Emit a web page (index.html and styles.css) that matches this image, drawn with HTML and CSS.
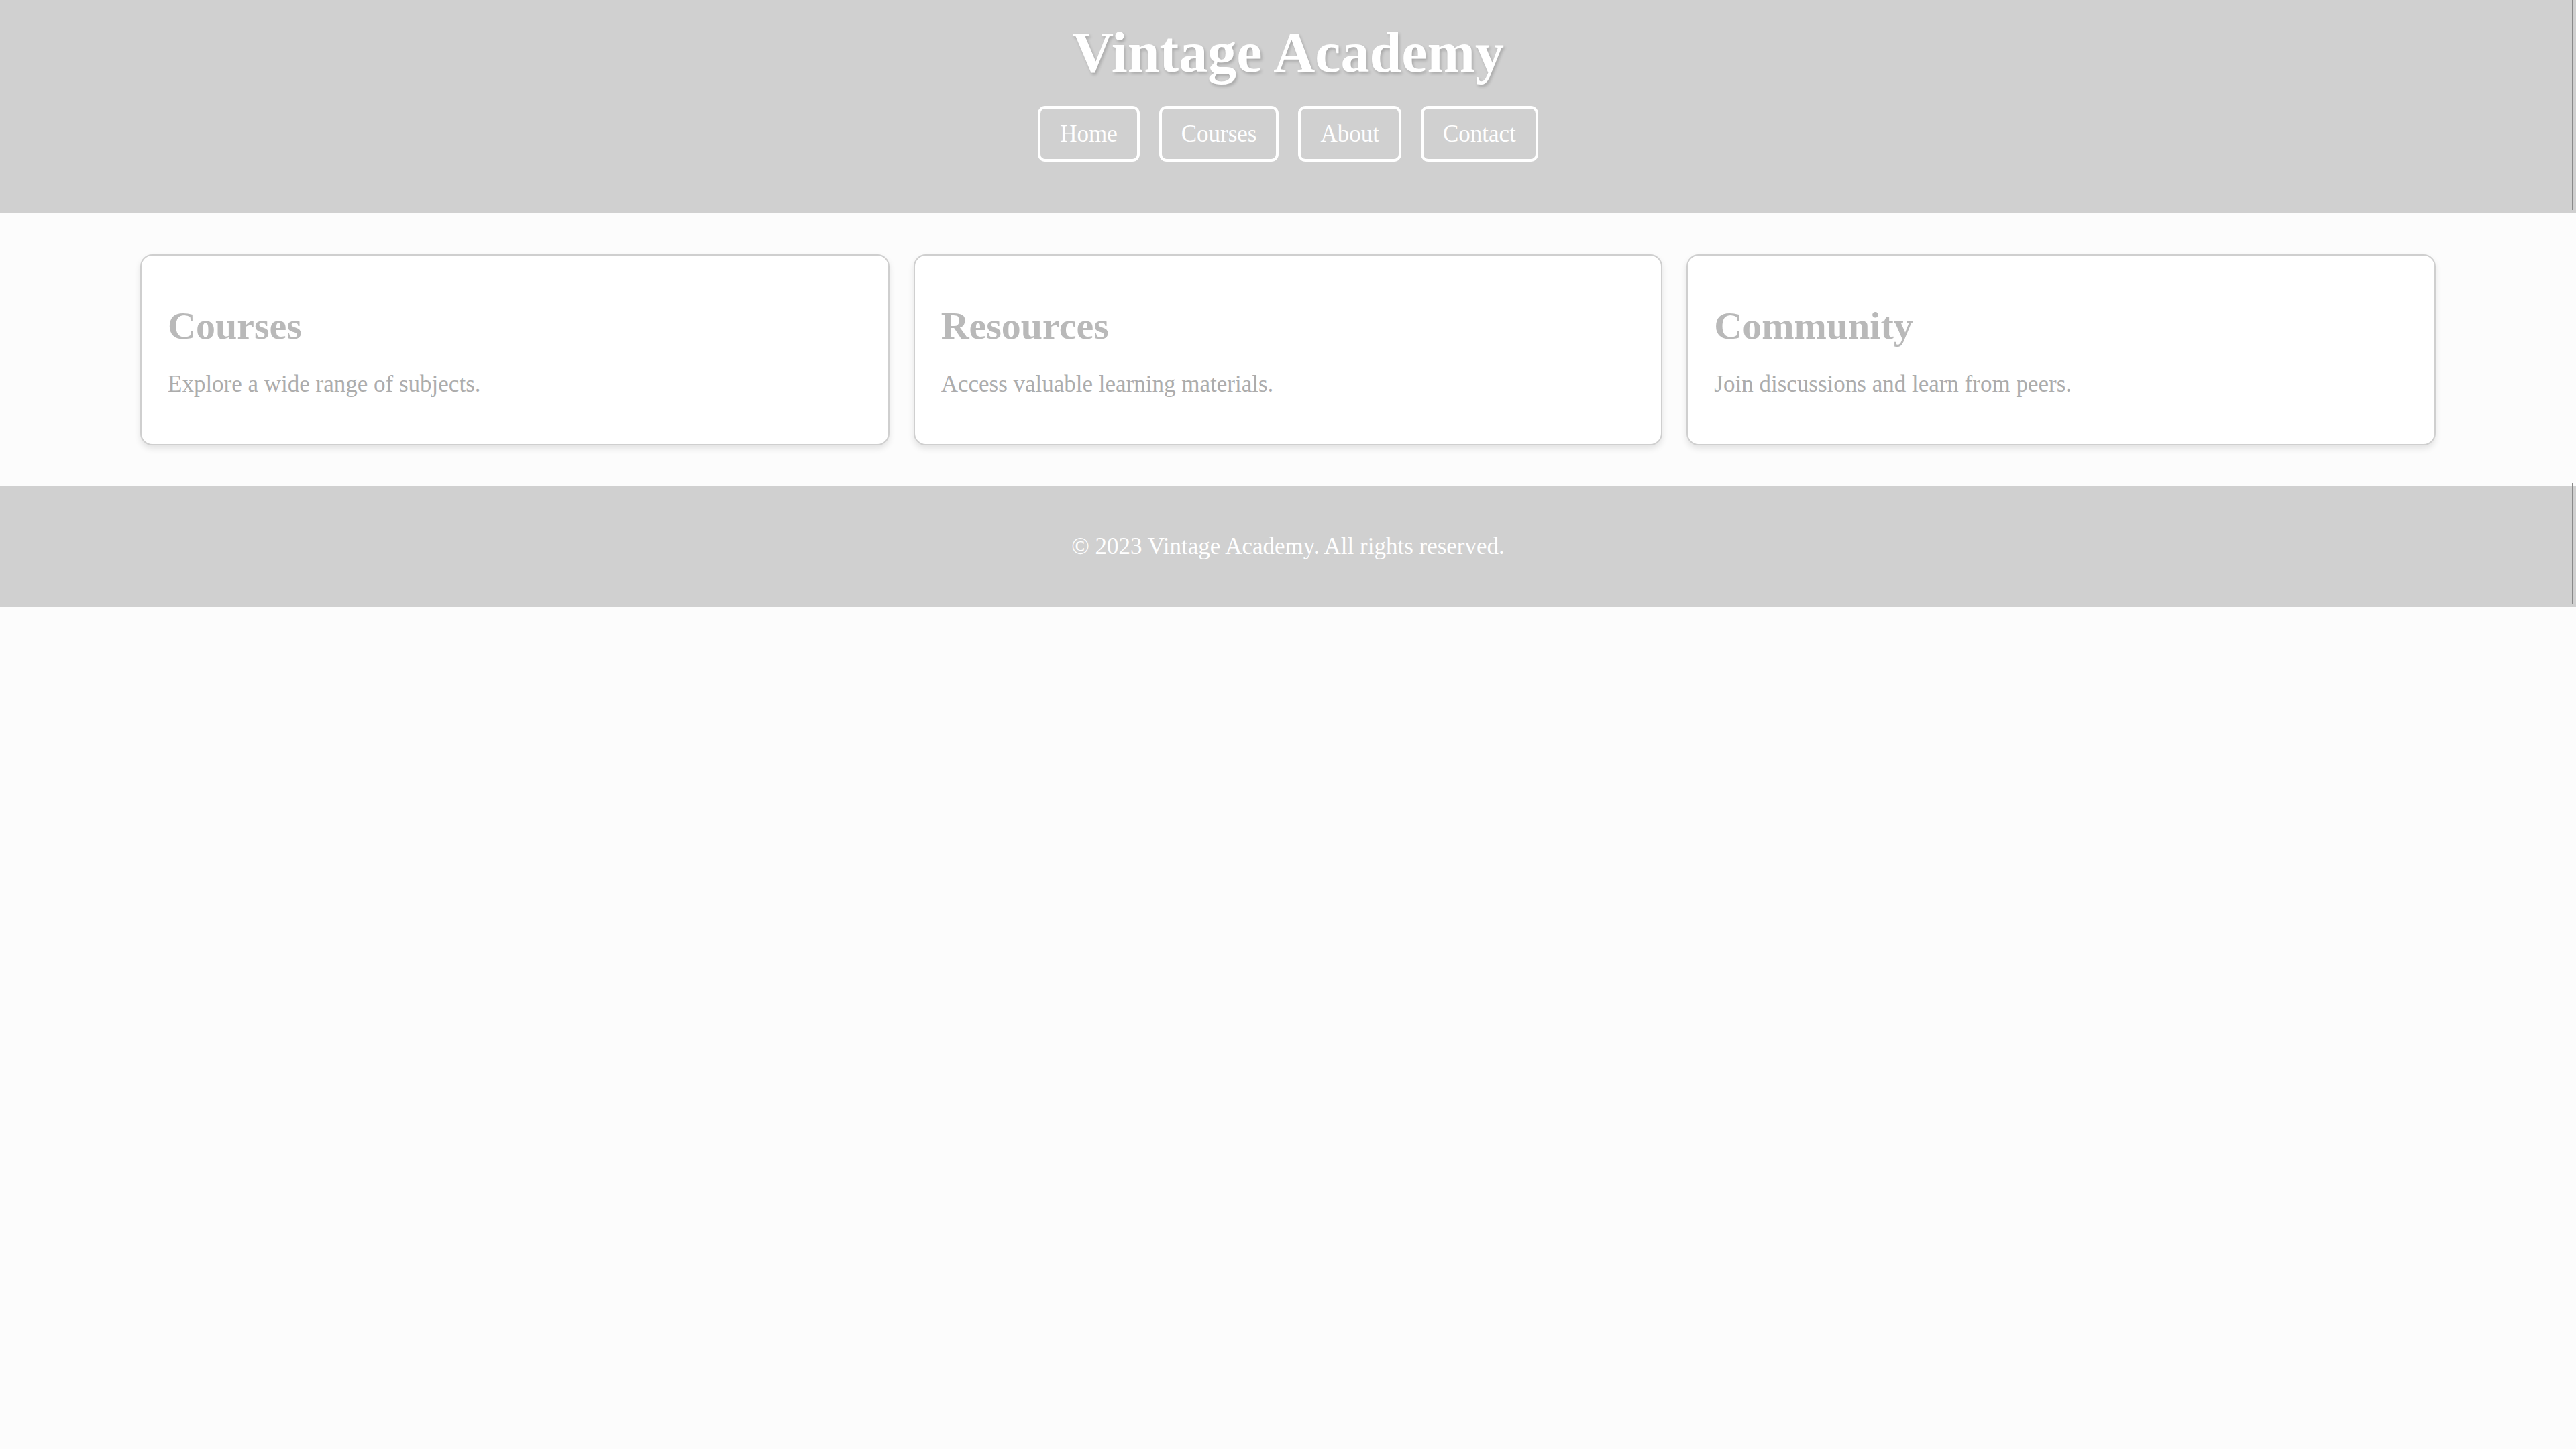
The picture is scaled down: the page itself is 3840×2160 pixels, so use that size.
FILE: index.html
```html
<!DOCTYPE html>
<html lang="en">
<head>
<meta charset="utf-8">
<title>Vintage Academy</title>
<link rel="stylesheet" href="styles.css">
</head>
<body>
<header class="site-header">
  <h1 class="site-title">Vintage Academy</h1>
  <nav class="site-nav">
    <a class="nav-btn" href="#">Home</a>
    <a class="nav-btn" href="#">Courses</a>
    <a class="nav-btn" href="#">About</a>
    <a class="nav-btn" href="#">Contact</a>
  </nav>
</header>
<main class="site-main">
  <div class="cards">
    <section class="card">
      <h2 class="card-title">Courses</h2>
      <p class="card-text">Explore a wide range of subjects.</p>
    </section>
    <section class="card">
      <h2 class="card-title">Resources</h2>
      <p class="card-text">Access valuable learning materials.</p>
    </section>
    <section class="card">
      <h2 class="card-title">Community</h2>
      <p class="card-text">Join discussions and learn from peers.</p>
    </section>
  </div>
</main>
<footer class="site-footer">
  <p class="footer-text">&copy; 2023 Vintage Academy. All rights reserved.</p>
</footer>
</body>
</html>
```
FILE: styles.css
```css
html, body {
  margin: 0;
  padding: 0;
}
body {
  background: #fcfcfc;
  font-family: "Liberation Serif", "Times New Roman", serif;
  color: #aaaaaa;
}
.site-header {
  position: relative;
  background: #d0d0d0;
  padding: 29px 0 77px;
  text-align: center;
}
.site-header::after,
.site-footer::after {
  content: "";
  position: absolute;
  right: 5px;
  top: -5px;
  bottom: 5px;
  width: 1px;
  background: #8a8a8a;
}
.site-title {
  margin: 0;
  font-size: 86px;
  line-height: 98px;
  font-weight: bold;
  color: #ffffff;
  text-shadow: 2px 3px 4px rgba(0, 0, 0, 0.2);
}
.site-nav {
  margin-top: 31px;
  display: flex;
  justify-content: center;
  gap: 29px;
}
.nav-btn {
  display: block;
  border: 4px solid #ffffff;
  border-radius: 11px;
  padding: 17.5px 29px;
  font-size: 35px;
  line-height: 40px;
  color: #ffffff;
  text-decoration: none;
}
.site-main {
  padding: 61px 0;
}
.cards {
  width: 3422px;
  margin: 0 auto;
  display: grid;
  grid-template-columns: repeat(3, 1fr);
  gap: 36px;
}
.card {
  background: #ffffff;
  border: 2px solid #cfcfcf;
  border-radius: 18px;
  padding: 39px;
  box-shadow: 0 5px 10px rgba(0, 0, 0, 0.1);
}
.card-title {
  margin: 33px 0 34px;
  font-size: 58px;
  line-height: 65.5px;
  font-weight: bold;
  color: #b9b9b9;
}
.card-text {
  margin: 0 0 31px;
  font-size: 35px;
  line-height: 39.6px;
  color: #acacac;
}
.site-footer {
  position: relative;
  background: #d0d0d0;
  padding: 70px 0;
  text-align: center;
}
.footer-text {
  margin: 0;
  font-size: 35px;
  line-height: 39.6px;
  color: #ffffff;
}
```
